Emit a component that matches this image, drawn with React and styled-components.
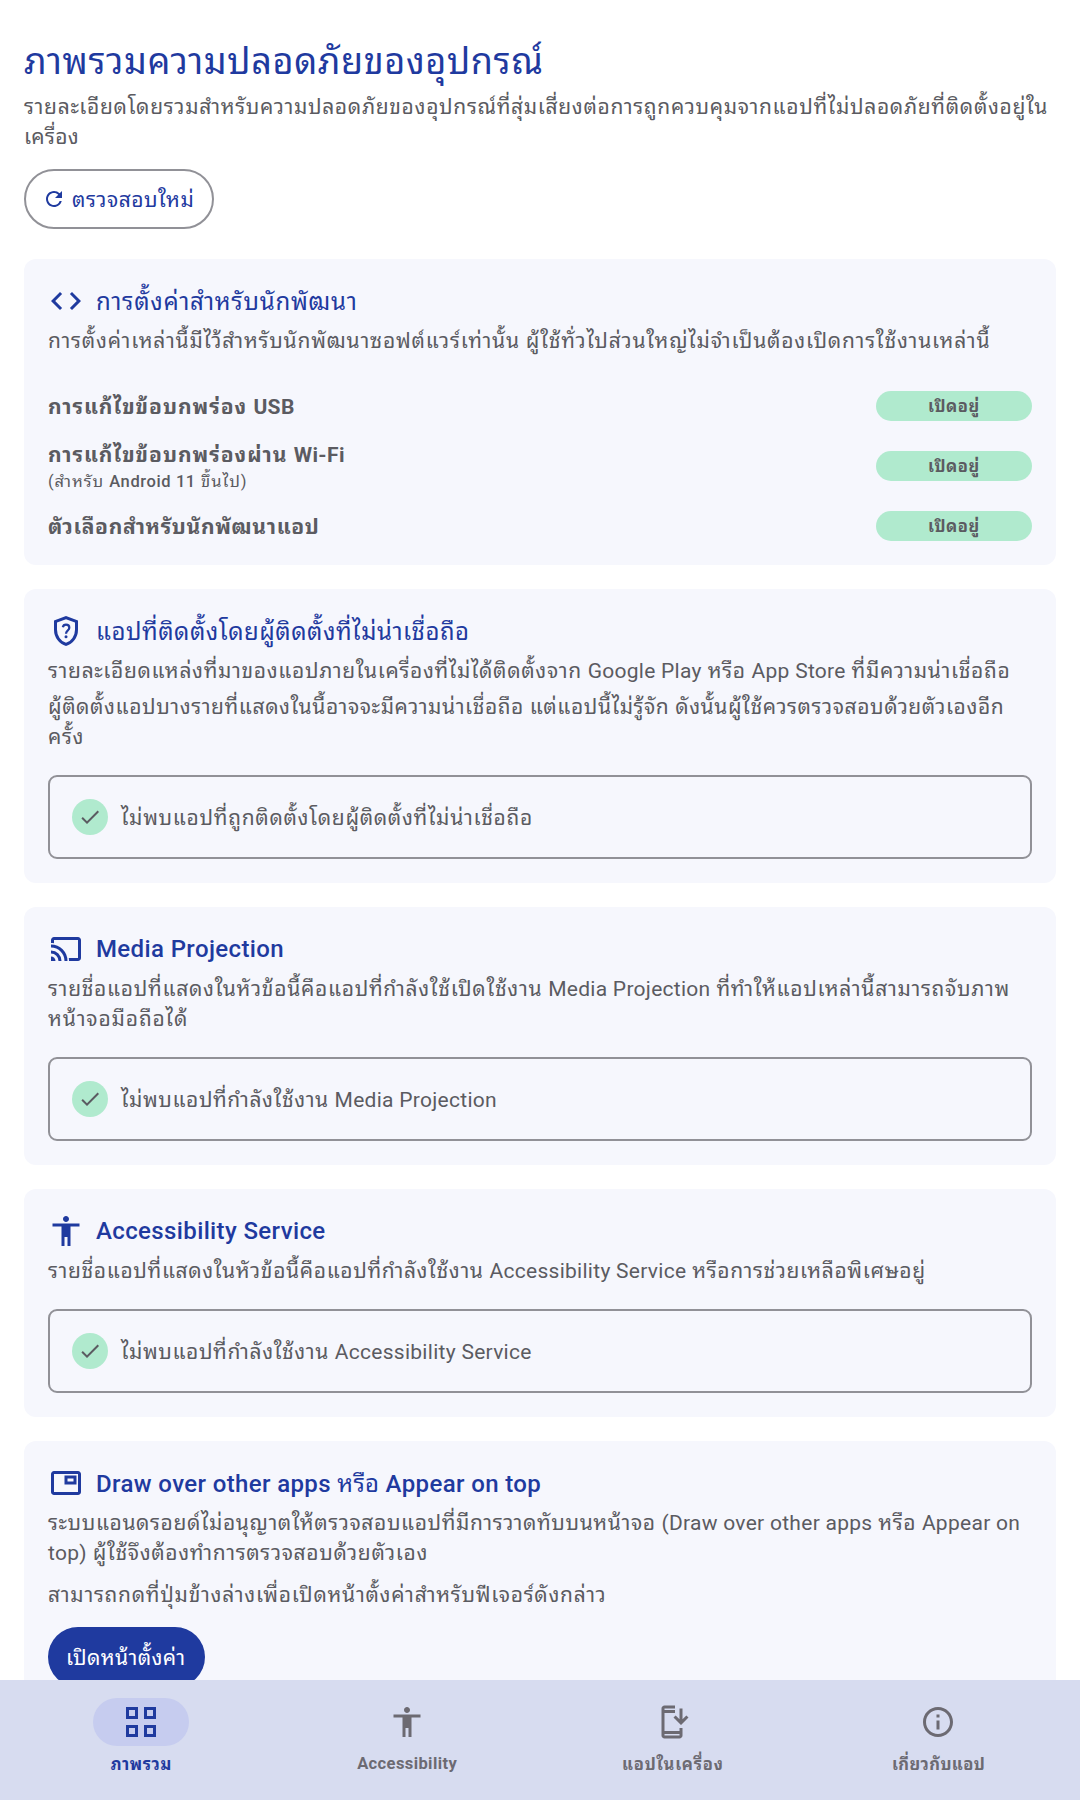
import React from 'react';
import styled, { createGlobalStyle } from 'styled-components';
import {
  MdRefresh,
  MdCode,
  MdAccessibility,
  MdCheck,
  MdOutlineInstallMobile,
  MdInfoOutline,
} from 'react-icons/md';

const color = {
  primary: '#1f3a9f',
  text: '#5b5b61',
  outline: '#919197',
  surface: '#f6f7fd',
  success: '#b0eace',
  nav: '#d7dcf0',
  navActive: '#c6ccef',
  navText: '#6c6a72',
};

const GlobalStyle = createGlobalStyle`
  * { box-sizing: border-box; }
  html, body { margin: 0; padding: 0; background: #fff; }
  body {
    font-family: Roboto, "Noto Sans Thai Looped", "Noto Sans Thai", "Noto Sans", sans-serif;
    color: ${color.text};
  }
  h1, h2, p { margin: 0; font-weight: 400; }
`;

const Screen = styled.div`
  width: 1080px;
  height: 1800px;
  display: flex;
  flex-direction: column;
  overflow: hidden;
`;

const Content = styled.main`
  flex: 1;
  min-height: 0;
  overflow: hidden;
  padding: 31px 24px 0;
`;

const Title = styled.h1`
  height: 60px;
  padding-top: 1px;
  font-size: 36px;
  line-height: 60px;
  letter-spacing: 0.62px;
  color: ${color.primary};
`;

const LineText = styled.span`
  display: block;
  padding-top: 1px;
  font-size: 21px;
  line-height: 30px;
  height: 30px;
  white-space: nowrap;
  letter-spacing: ${(p) => p.$ls ?? 0.65}px;
`;

const Latin = styled.span`
  letter-spacing: ${(p) => p.$ls ?? 0.28}px;
`;

const Thai = styled.span`
  font-weight: 400;
  letter-spacing: ${(p) => p.$ls ?? 0.6}px;
`;

const Paragraph = styled.p`
  margin-top: ${(p) => p.$gap ?? 6}px;
`;

const RecheckButton = styled.button`
  display: flex;
  align-items: center;
  gap: 6px;
  width: 190px;
  height: 60px;
  margin-top: 18px;
  padding: 0 0 0 16px;
  border: 2px solid ${color.outline};
  border-radius: 30px;
  background: #fff;
  color: ${color.primary};
  font: inherit;
`;

const SettingsButton = styled.button`
  display: flex;
  align-items: center;
  width: 157px;
  height: 60px;
  margin-top: 18px;
  padding: 0 0 0 18px;
  border: 0;
  border-radius: 30px;
  background: ${color.primary};
  color: #fff;
  font: inherit;
`;

const Cards = styled.div`
  display: flex;
  flex-direction: column;
  gap: 24px;
  margin-top: 30px;
`;

const Card = styled.section`
  padding: 24px;
  border-radius: 12px;
  background: ${color.surface};
`;

const CardHeader = styled.header`
  display: flex;
  align-items: center;
  gap: 12px;
  height: 36px;
  color: ${color.primary};
  svg { flex: none; }
`;

const Heading = styled.h2`
  padding-top: ${(p) => (p.$lowered ? 1 : 0)}px;
  font-size: 24px;
  font-weight: 500;
  line-height: 36px;
  height: 36px;
  white-space: nowrap;
  letter-spacing: 0.375px;
`;

const Settings = styled.div`
  display: flex;
  flex-direction: column;
  gap: 18px;
  margin-top: 36px;
`;

const Setting = styled.div`
  display: flex;
  align-items: center;
  justify-content: space-between;
`;

const SettingName = styled(LineText)`
  font-weight: 700;
`;

const SettingNote = styled.span`
  display: block;
  height: 24px;
  padding-top: 1px;
  font-size: 16.5px;
  font-weight: 500;
  line-height: 24px;
  letter-spacing: 0.6px;
`;

const StatusPill = styled.span`
  width: 156px;
  height: 30px;
  padding-top: 1px;
  border-radius: 15px;
  background: ${color.success};
  font-size: 16.5px;
  font-weight: 700;
  line-height: 30px;
  letter-spacing: 0.6px;
  text-align: center;
`;

const ResultBox = styled.div`
  display: flex;
  align-items: center;
  gap: 13px;
  height: 84px;
  margin-top: 24px;
  padding: 0 22px;
  border: 2px solid ${color.outline};
  border-radius: 9px;
`;

const CheckBadge = styled.span`
  display: flex;
  align-items: center;
  justify-content: center;
  width: 36px;
  height: 36px;
  border-radius: 50%;
  background: ${color.success};
`;

const NavBar = styled.nav`
  display: grid;
  grid-template-columns: repeat(4, 1fr);
  height: 120px;
  padding: 18px 9px 0 8px;
  background: ${color.nav};
`;

const NavItem = styled.div`
  display: flex;
  flex-direction: column;
  align-items: center;
  gap: 6px;
  color: ${(p) => (p.$active ? color.primary : color.navText)};
`;

const NavIcon = styled.span`
  display: flex;
  align-items: center;
  justify-content: center;
  width: 96px;
  height: 48px;
  border-radius: 24px;
  background: ${(p) => (p.$active ? color.navActive : 'transparent')};
`;

const NavLabel = styled.span`
  height: 24px;
  padding-top: ${(p) => (p.$lowered ? 1 : 0)}px;
  padding-left: 1px;
  font-size: 16.5px;
  font-weight: 700;
  line-height: 24px;
  letter-spacing: ${(p) => p.$ls ?? 0.4}px;
`;

const Icon = ({ children }) => (
  <svg width="36" height="36" viewBox="0 0 24 24" fill="currentColor">
    {children}
  </svg>
);

const ShieldQuestionIcon = () => (
  <Icon>
    <path d="M12 22q-3.475-.875-5.738-3.988T4 11.1V5l8-3 8 3v6.1q0 3.8-2.262 6.912T12 22Zm0-2.1q2.6-.825 4.3-3.3t1.7-5.5V6.375l-6-2.25-6 2.25V11.1q0 3.025 1.7 5.5t4.3 3.3Z" />
    <path
      d="M9.9 9.5C10.1 8.5 10.9 7.8 12 7.8c1.3 0 2.2.9 2.2 2 0 1.8-2.2 2-2.2 4"
      fill="none"
      stroke="currentColor"
      strokeWidth="1.5"
    />
    <circle cx="12" cy="15.9" r="1" />
  </Icon>
);

const CastIcon = () => (
  <Icon>
    <path d="M20 20h-6q0-.5-.038-1T13.85 18H20V6H4v2.15q-.5-.075-1-.113T2 8V6q0-.825.588-1.412T4 4h16q.825 0 1.413.588T22 6v12q0 .825-.587 1.413T20 20ZM2 20v-3q1.25 0 2.125.875T5 20H2Zm5 0q0-2.075-1.463-3.537T2 15v-2q2.925 0 4.963 2.038T9 20H7Zm4 0q0-1.875-.712-3.512t-1.926-2.85q-1.212-1.213-2.85-1.926T2 11V9q2.275 0 4.275.863t3.5 2.362q1.5 1.5 2.363 3.5T13 20h-2Z" />
  </Icon>
);

const PictureInPictureIcon = () => (
  <Icon>
    <path
      fillRule="evenodd"
      d="M4 20q-.825 0-1.412-.587T2 18V6q0-.825.588-1.412T4 4h16q.825 0 1.413.588T22 6v12q0 .825-.587 1.413T20 20H4Zm0-2h16V6H4v12ZM11 7h8v6h-8V7Zm2 2v2h4V9h-4Z"
    />
  </Icon>
);

const GridIcon = () => (
  <Icon>
    <path
      fillRule="evenodd"
      d="M2 2h8v8H2zM4 4v4h4V4zM14 2h8v8h-8zM16 4v4h4V4zM2 14h8v8H2zM4 16v4h4v-4zM14 14h8v8h-8zM16 16v4h4v-4z"
    />
  </Icon>
);

// Latin phrases inside a Thai line carry tighter tracking than the Thai text.
const Tracked = ({ text, latinLs }) =>
  text
    .split(/([A-Za-z(][A-Za-z0-9() -]*[A-Za-z0-9)])/)
    .map((part, i) => (i % 2 ? <Latin key={i} $ls={latinLs}>{part}</Latin> : part));

const Line = ({ children, ls }) => (
  <LineText $ls={ls}>
    <Tracked text={children} />
  </LineText>
);

const Name = ({ children, ls }) => (
  <SettingName $ls={ls}>
    <Tracked text={children} latinLs={0.4} />
  </SettingName>
);

const Result = ({ children, ls }) => (
  <ResultBox>
    <CheckBadge>
      <MdCheck size={24} />
    </CheckBadge>
    <Line ls={ls}>{children}</Line>
  </ResultBox>
);

export default function App() {
  return (
    <>
      <GlobalStyle />
      <Screen>
        <Content>
          <Title>ภาพรวมความปลอดภัยของอุปกรณ์</Title>
          <Paragraph $gap={0}>
            <Line ls={0.67}>รายละเอียดโดยรวมสำหรับความปลอดภัยของอุปกรณ์ที่สุ่มเสี่ยงต่อการถูกควบคุมจากแอปที่ไม่ปลอดภัยที่ติดตั้งอยู่ใน</Line>
            <Line ls={0.3}>เครื่อง</Line>
          </Paragraph>
          <RecheckButton>
            <MdRefresh size={24} />
            <Line ls={0.5}>ตรวจสอบใหม่</Line>
          </RecheckButton>

          <Cards>
            <Card>
              <CardHeader>
                <MdCode size={36} />
                <Heading $lowered>
                  <Thai $ls={0.76}>การตั้งค่าสำหรับนักพัฒนา</Thai>
                </Heading>
              </CardHeader>
              <Paragraph>
                <Line ls={0.79}>การตั้งค่าเหล่านี้มีไว้สำหรับนักพัฒนาซอฟต์แวร์เท่านั้น ผู้ใช้ทั่วไปส่วนใหญ่ไม่จำเป็นต้องเปิดการใช้งานเหล่านี้</Line>
              </Paragraph>
              <Settings>
                <Setting>
                  <Name ls={0.97}>การแก้ไขข้อบกพร่อง USB</Name>
                  <StatusPill>เปิดอยู่</StatusPill>
                </Setting>
                <Setting>
                  <div>
                    <Name ls={0.97}>การแก้ไขข้อบกพร่องผ่าน Wi-Fi</Name>
                    <SettingNote>
                      <Thai $ls={0.95}>(สำหรับ </Thai>
                      Android 11
                      <Thai $ls={1.05}> ขึ้นไป)</Thai>
                    </SettingNote>
                  </div>
                  <StatusPill>เปิดอยู่</StatusPill>
                </Setting>
                <Setting>
                  <Name ls={0.66}>ตัวเลือกสำหรับนักพัฒนาแอป</Name>
                  <StatusPill>เปิดอยู่</StatusPill>
                </Setting>
              </Settings>
            </Card>

            <Card>
              <CardHeader>
                <ShieldQuestionIcon />
                <Heading $lowered>
                  <Thai $ls={0.52}>แอปที่ติดตั้งโดยผู้ติดตั้งที่ไม่น่าเชื่อถือ</Thai>
                </Heading>
              </CardHeader>
              <Paragraph>
                <Line ls={0.66}>รายละเอียดแหล่งที่มาของแอปภายในเครื่องที่ไม่ได้ติดตั้งจาก Google Play หรือ App Store ที่มีความน่าเชื่อถือ</Line>
              </Paragraph>
              <Paragraph>
                <Line ls={0.57}>ผู้ติดตั้งแอปบางรายที่แสดงในนี้อาจจะมีความน่าเชื่อถือ แต่แอปนี้ไม่รู้จัก ดังนั้นผู้ใช้ควรตรวจสอบด้วยตัวเองอีก</Line>
                <Line ls={0.6}>ครั้ง</Line>
              </Paragraph>
              <Result ls={0.69}>ไม่พบแอปที่ถูกติดตั้งโดยผู้ติดตั้งที่ไม่น่าเชื่อถือ</Result>
            </Card>

            <Card>
              <CardHeader>
                <CastIcon />
                <Heading>Media Projection</Heading>
              </CardHeader>
              <Paragraph>
                <Line ls={0.69}>รายชื่อแอปที่แสดงในหัวข้อนี้คือแอปที่กำลังใช้เปิดใช้งาน Media Projection ที่ทำให้แอปเหล่านี้สามารถจับภาพ</Line>
                <Line ls={0.85}>หน้าจอมือถือได้</Line>
              </Paragraph>
              <Result ls={0.58}>ไม่พบแอปที่กำลังใช้งาน Media Projection</Result>
            </Card>

            <Card>
              <CardHeader>
                <MdAccessibility size={36} />
                <Heading>Accessibility Service</Heading>
              </CardHeader>
              <Paragraph>
                <Line ls={0.63}>รายชื่อแอปที่แสดงในหัวข้อนี้คือแอปที่กำลังใช้งาน Accessibility Service หรือการช่วยเหลือพิเศษอยู่</Line>
              </Paragraph>
              <Result ls={0.59}>ไม่พบแอปที่กำลังใช้งาน Accessibility Service</Result>
            </Card>

            <Card>
              <CardHeader>
                <PictureInPictureIcon />
                <Heading $lowered>
                  Draw over other apps <Thai $ls={0.25}>หรือ</Thai> Appear on top
                </Heading>
              </CardHeader>
              <Paragraph>
                <Line ls={0.59}>ระบบแอนดรอยด์ไม่อนุญาตให้ตรวจสอบแอปที่มีการวาดทับบนหน้าจอ (Draw over other apps หรือ Appear on</Line>
                <Line ls={0.66}>top) ผู้ใช้จึงต้องทำการตรวจสอบด้วยตัวเอง</Line>
              </Paragraph>
              <Paragraph $gap={12}>
                <Line ls={0.72}>สามารถกดที่ปุ่มข้างล่างเพื่อเปิดหน้าตั้งค่าสำหรับฟีเจอร์ดังกล่าว</Line>
              </Paragraph>
              <SettingsButton>
                <Line ls={0.375}>เปิดหน้าตั้งค่า</Line>
              </SettingsButton>
            </Card>
          </Cards>
        </Content>

        <NavBar>
          <NavItem $active>
            <NavIcon $active>
              <GridIcon />
            </NavIcon>
            <NavLabel $lowered $ls={0.6}>ภาพรวม</NavLabel>
          </NavItem>
          <NavItem>
            <NavIcon>
              <MdAccessibility size={36} />
            </NavIcon>
            <NavLabel>Accessibility</NavLabel>
          </NavItem>
          <NavItem>
            <NavIcon>
              <MdOutlineInstallMobile size={36} />
            </NavIcon>
            <NavLabel $lowered $ls={0.8}>แอปในเครื่อง</NavLabel>
          </NavItem>
          <NavItem>
            <NavIcon>
              <MdInfoOutline size={36} />
            </NavIcon>
            <NavLabel $lowered>เกี่ยวกับแอป</NavLabel>
          </NavItem>
        </NavBar>
      </Screen>
    </>
  );
}
